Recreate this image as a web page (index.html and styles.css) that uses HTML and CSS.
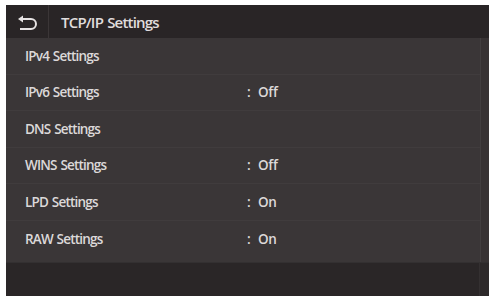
FILE: index.html
```html
<!DOCTYPE html>
<html>
<head>
<meta charset="utf-8">
<link rel="stylesheet" href="styles.css">
</head>
<body>
<div class="screen">
  <header class="bar">
    <div class="back">
      <svg width="24" height="16" viewBox="0 0 24 16">
        <path d="M5 4 H15 A5 5 0 0 1 15 14 H4" fill="none" stroke="#e6e3e3" stroke-width="2"/>
        <path d="M2 4 L7 0.5 L7 7.5 Z" fill="#e6e3e3"/>
      </svg>
    </div>
    <div class="title">TCP/IP Settings</div>
  </header>
  <div class="body">
    <ul class="list">
      <li class="row"><span class="label">IPv4 Settings</span></li>
      <li class="row"><span class="label">IPv6 Settings</span><span class="colon">:</span><span class="value">Off</span></li>
      <li class="row"><span class="label">DNS Settings</span></li>
      <li class="row"><span class="label">WINS Settings</span><span class="colon">:</span><span class="value">Off</span></li>
      <li class="row"><span class="label">LPD Settings</span><span class="colon">:</span><span class="value">On</span></li>
      <li class="row"><span class="label">RAW Settings</span><span class="colon">:</span><span class="value">On</span></li>
    </ul>
    <div class="scroll"></div>
  </div>
  <footer class="foot"><div class="foot-main"></div><div class="foot-side"></div></footer>
</div>
</body>
</html>
```
FILE: styles.css
```css
html, body {
  margin: 0;
  padding: 0;
  background: #ffffff;
}
body {
  width: 492px;
  height: 298px;
  padding: 5px 3px 2px 6px;
  box-sizing: border-box;
  font-family: "Open Sans", "DejaVu Sans", sans-serif;
  overflow: hidden;
}
.screen {
  width: 483px;
  height: 291px;
  display: flex;
  flex-direction: column;
  background: #3a3637;
}
.bar {
  height: 33px;
  background: #292526;
  display: flex;
  align-items: center;
  flex: none;
}
.back {
  flex: none;
  width: 43px;
  height: 33px;
  border-right: 1px solid #3b3637;
  display: flex;
  align-items: center;
  justify-content: center;
  box-sizing: border-box;
}
.back svg { margin-left: 2px; margin-top: 2px; }
.title {
  margin-left: 12px;
  margin-top: 1px;
  color: #e0dddd;
  font-size: 15px;
  font-weight: 600;
  letter-spacing: -0.8px;
  word-spacing: 1px;
}
.body {
  flex: 1;
  display: flex;
}
.list {
  list-style: none;
  margin: 0;
  padding: 0;
  flex: 1;
}
.row {
  height: 36.5px;
  display: flex;
  align-items: center;
  border-bottom: 1px solid #403c3d;
  box-sizing: border-box;
  color: #dcd9d9;
  font-size: 13.5px;
  font-weight: 600;
  letter-spacing: -0.8px;
  word-spacing: 1px;
}
.row:last-child { border-bottom: none; }
.label {
  width: 222px;
  padding-left: 19px;
}
.colon {
  width: 11px;
  letter-spacing: 0;
}
.value {
  letter-spacing: -0.3px;
}
.scroll {
  width: 9px;
  border-left: 1px solid #433f40;
  background: #383334;
  box-sizing: border-box;
}
.foot {
  height: 33px;
  flex: none;
  display: flex;
  background: #2a2627;
  border-top: 1px solid #333031;
}
.foot-main { flex: 1; }
.foot-side { width: 9px; background: #2d292a; border-left: 1px solid #343031; }
```
